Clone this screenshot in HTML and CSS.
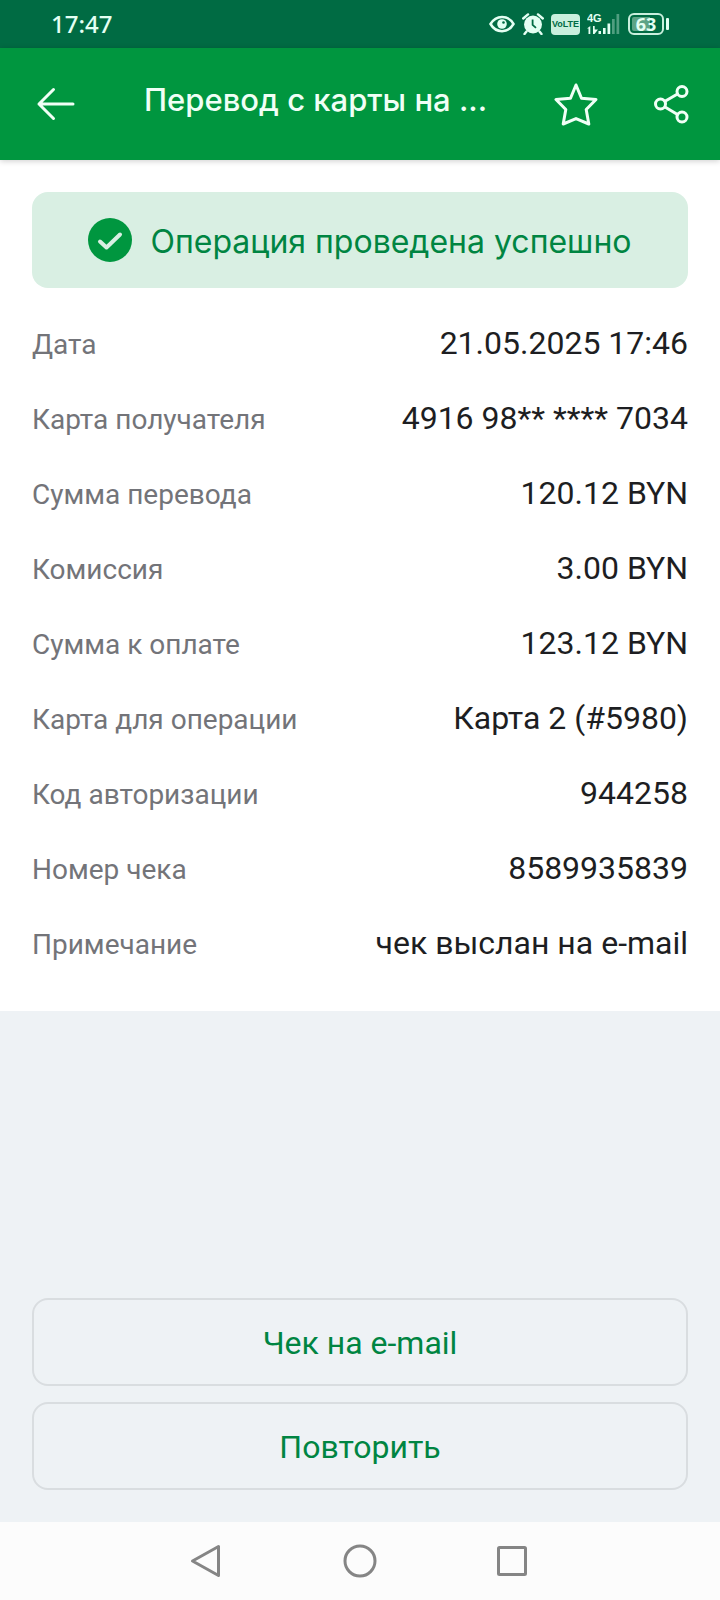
FILE: index.html
```html
<!DOCTYPE html>
<html lang="ru">
<head>
<meta charset="utf-8">
<meta name="viewport" content="width=device-width, initial-scale=1">
<title>Перевод с карты на карту</title>
<link rel="stylesheet" href="styles.css">
</head>
<body>
<div class="screen">
  <div class="status">
    <span class="status-time">17:47</span>
    <div class="status-icons">
      <svg width="26" height="18" viewBox="0 0 26 18"><path d="M1.500 9C7-.5 19-.5 24.500 9 19 18.500 7 18.500 1.500 9Z" fill="none" stroke="#e4fff3" stroke-width="2.500"/><circle cx="13" cy="9" r="4.800" fill="#e4fff3"/><circle cx="14.500" cy="7.500" r="1.300" fill="#006b43"/></svg>
      <svg width="22" height="22" viewBox="0 0 22 22"><circle cx="11" cy="11.500" r="9" fill="#e4fff3"/><path d="M1.200 5.500 6 1.400M20.800 5.500 16 1.400M4.500 18.500 2.500 21M17.500 18.500l2 2.500" stroke="#e4fff3" stroke-width="2.400" stroke-linecap="round"/><path d="M10.600 6.500v5.300l3.400 3" fill="none" stroke="#006b43" stroke-width="1.800"/></svg>
      <span class="volte">VoLTE</span>
      <svg width="34" height="22" viewBox="0 0 34 22"><text x="0" y="9" class="net-label">4G</text><g fill="#e4fff3"><path d="M0 15.500 3.300 13v8H1.500v-5.500ZM6 13h1.700v3.500H11L7.500 21H6Z"/><path d="M11.500 18H14v3h-2.500ZM16 15h2.600v6H16ZM20.500 10.500h2.700V21h-2.700Z"/><path d="M25 6h2.700v15H25ZM29.500 1h2.700v20h-2.700Z" opacity=".35"/></g></svg>
      <div class="battery"><span class="battery-body">63</span><span class="battery-tip"></span></div>
    </div>
  </div>
  <header class="appbar">
    <button class="icon-btn" type="button" aria-label="Назад"><svg width="44" height="44" viewBox="0 0 44 44"><path d="M39 22H5M19.500 7.500 5 22l14.500 14.500"/></svg></button>
    <h1 class="title">Перевод с карты на ...</h1>
    <button class="icon-btn" type="button" aria-label="В избранное"><svg width="44" height="44" viewBox="0 0 44 44"><path d="M22 3l5.500 13.300 14.500 1.200-9.800 10L34.800 42 22 36.600 9.200 42l2.600-14.500L2 17.500l14.500-1.200Z"/></svg></button>
    <button class="icon-btn" type="button" aria-label="Поделиться"><svg width="44" height="44" viewBox="0 0 44 44"><circle cx="10.500" cy="22" r="5"/><circle cx="32" cy="9.500" r="5"/><circle cx="32" cy="35" r="5"/><path d="M15 19.300 27.500 12M15 25l12.500 7.500"/></svg></button>
  </header>
  <main class="main">
    <section class="card">
      <div class="banner" role="status">
        <svg width="44" height="44" viewBox="0 0 44 44"><circle cx="22" cy="22" r="22" fill="#00963f"/><path d="M12 23.500l6.500 6 13.500-13" fill="none" stroke="#d9efe3" stroke-width="4" stroke-linecap="round" stroke-linejoin="round"/></svg>
        <span class="banner-text">Операция проведена успешно</span>
      </div>
      <dl class="details">
        <div class="row"><dt>Дата</dt><dd>21.05.2025 17:46</dd></div>
        <div class="row"><dt>Карта получателя</dt><dd>4916 98** **** 7034</dd></div>
        <div class="row"><dt>Сумма перевода</dt><dd>120.12 BYN</dd></div>
        <div class="row"><dt>Комиссия</dt><dd>3.00 BYN</dd></div>
        <div class="row"><dt>Сумма к оплате</dt><dd>123.12 BYN</dd></div>
        <div class="row"><dt>Карта для операции</dt><dd>Карта 2 (#5980)</dd></div>
        <div class="row"><dt>Код авторизации</dt><dd>944258</dd></div>
        <div class="row"><dt>Номер чека</dt><dd>8589935839</dd></div>
        <div class="row"><dt>Примечание</dt><dd>чек выслан на e-mail</dd></div>
      </dl>
    </section>
    <div class="actions">
      <button class="action" type="button">Чек на e-mail</button>
      <button class="action" type="button">Повторить</button>
    </div>
  </main>
  <nav class="navbar">
    <button class="nav-btn" type="button" aria-label="Назад"><svg width="36" height="36" viewBox="0 0 36 36"><path d="M28.500 3.500v29L2.500 18Z"/></svg></button>
    <button class="nav-btn" type="button" aria-label="Домой"><svg width="36" height="36" viewBox="0 0 36 36"><circle cx="18" cy="18" r="15"/></svg></button>
    <button class="nav-btn" type="button" aria-label="Недавние"><svg width="36" height="36" viewBox="0 0 36 36"><rect x="4.500" y="4.500" width="27" height="27" rx="1"/></svg></button>
  </nav>
</div>
</body>
</html>
```
FILE: styles.css
```css
* { box-sizing: border-box; }
body { margin: 0; font-family: Roboto, "Noto Sans", sans-serif; color: #1d1e22; background: #eef2f5; }
button { border: 0; padding: 0; background: none; font: inherit; color: inherit; cursor: pointer; }
svg { display: block; flex: none; }
.screen { display: flex; flex-direction: column; min-height: 100vh; }

.status { display: flex; align-items: center; justify-content: space-between; height: 48px; padding: 0 51px; background: #006b43; color: #e4fff3; }
.status-time { font: 500 24px/48px "Noto Sans", sans-serif; }
.status-icons { display: flex; align-items: center; gap: 7px; }
.volte { width: 29px; height: 21px; border-radius: 4px; background: #c9efdd; color: #006b43; font: 700 9px/21px "Liberation Sans", sans-serif; text-align: center; }
.net-label { font: 700 11px "Liberation Sans", sans-serif; fill: #e4fff3; }
.battery { display: flex; align-items: center; gap: 2px; }
.battery-body { width: 36px; height: 22px; border: 2px solid #c9efdd; border-radius: 6px; background: linear-gradient(90deg, #5da486 62%, #006b43 62%); background-clip: content-box; padding: 2px; font: 700 18px/14px "Noto Sans", sans-serif; text-align: center; }
.battery-tip { width: 3px; height: 12px; border-radius: 1px; background: #e4fff3; }

.appbar { position: relative; display: flex; align-items: center; height: 112px; padding: 0 26px 0 34px; background: #00963f; color: #f0fff6; box-shadow: 0 1px 6px rgba(0, 0, 0, .2); }
.icon-btn { flex: none; }
.icon-btn svg { fill: none; stroke: currentColor; stroke-width: 3; stroke-linecap: round; stroke-linejoin: round; }
.title { flex: 1; margin: 0; padding: 0 0 8px 66px; font: 500 31px/40px Inter, sans-serif; white-space: nowrap; }
.icon-btn + .icon-btn { margin-left: 52px; }

.main { flex: 1; display: flex; flex-direction: column; justify-content: space-between; }
.card { padding: 32px 32px 30px; background: #fff; }
.banner { display: flex; align-items: center; justify-content: center; gap: 18px; min-height: 96px; border-radius: 16px; background: #d9efe3; color: #008542; font: 400 32px/40px Inter, sans-serif; }
.banner-text { padding-top: 4px; }
.details { margin: 18px 0 0; }
.row { display: flex; align-items: baseline; justify-content: space-between; gap: 16px; height: 75px; line-height: 75px; }
.row dt { font-size: 28px; color: #737479; }
.row dd { margin: 0; font-size: 32px; }
.actions { display: flex; flex-direction: column; gap: 16px; padding: 32px; }
.action { height: 88px; padding-top: 2px; border: 2px solid #d9dde0; border-radius: 16px; font-size: 32px; color: #008542; }

.navbar { display: flex; justify-content: center; align-items: center; gap: 116px; height: 78px; background: #fcfcfc; color: #858585; }
.nav-btn svg { fill: none; stroke: currentColor; stroke-width: 3; stroke-linejoin: round; }
```
